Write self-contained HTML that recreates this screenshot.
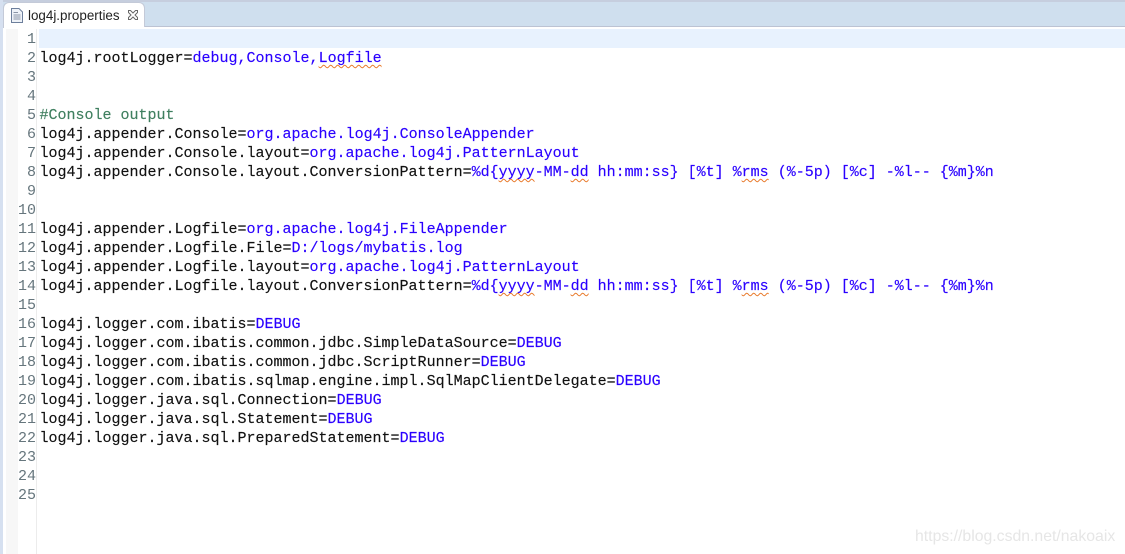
<!DOCTYPE html>
<html><head><meta charset="utf-8">
<style>
html,body{margin:0;padding:0;background:#fff}
#p{position:relative;width:1125px;height:554px;overflow:hidden;background:#fff;font-family:"Liberation Mono",monospace;font-size:15px}
.a{position:absolute}
.l{position:absolute;left:39.500px;margin-top:1px;white-space:pre;height:19px;line-height:19px;color:#111;-webkit-text-stroke:.15px currentColor}
.n{position:absolute;left:18px;width:18px;margin-top:1px;text-align:right;height:19px;line-height:19px;color:#66767d;font-family:"Liberation Mono",monospace;font-size:15px}
.v{color:#2a00ff}
.s{text-decoration:underline wavy #e8792a 1px;text-underline-offset:2px;text-decoration-skip-ink:none}
</style></head><body><div id="p">
<div class="a" style="left:0;top:0;width:1125px;height:2px;background:#c6cede"></div>
<div class="a" style="left:0;top:2px;width:1125px;height:24px;background:#cfdfee"></div>
<div class="a" style="left:0;top:26px;width:1125px;height:1px;background:#bcc3d3"></div>
<div class="a" style="left:0;top:0;width:3px;height:554px;background:#d6e0f0"></div>
<div class="a" style="left:3px;top:2px;width:142px;height:26px;background:#fff;border:1px solid #c4cad8;border-bottom:0;border-radius:6px 6px 0 0;box-sizing:border-box"></div>
<div class="a" style="left:4px;top:27px;width:1121px;height:527px;background:#fff"></div>
<svg class="a" style="left:11px;top:8px" width="12" height="15" viewBox="0 0 12 15"><path d="M.5.5H8L11.500 4V14.500H.5Z" fill="#eef2f8" stroke="#6d7f9c"/><path d="M2.500 4.500H7M2.500 7H9.500M2.500 9H9.500M2.500 11H9.500" stroke="#8a94a6"/></svg>
<div class="a" style="left:28px;top:7px;font:13.400px/18px 'Liberation Sans',sans-serif;color:#222;white-space:nowrap">log4j.properties</div>
<svg class="a" style="left:127px;top:9px" width="12" height="12" viewBox="0 0 12 12"><path d="M1.500 1.500H3.500L6 4L8.500 1.500H10.500V3.500L8 6L10.500 8.500V10.500H8.500L6 8L3.500 10.500H1.500V8.500L4 6L1.500 3.500Z" fill="#fff" stroke="#666"/></svg>
<div class="a" style="left:6px;top:29px;width:12px;height:525px;background:#f7f7f7"></div>
<div class="a" style="left:36px;top:29px;width:1px;height:525px;background:#ececec"></div>
<div class="a" style="left:39px;top:29px;width:1086px;height:19px;background:#e8f2fe"></div>
<div class="n" style="top:29px">1</div>
<div class="n" style="top:48px">2</div>
<div class="n" style="top:67px">3</div>
<div class="n" style="top:86px">4</div>
<div class="n" style="top:105px">5</div>
<div class="n" style="top:124px">6</div>
<div class="n" style="top:143px">7</div>
<div class="n" style="top:162px">8</div>
<div class="n" style="top:181px">9</div>
<div class="n" style="top:200px">10</div>
<div class="n" style="top:219px">11</div>
<div class="n" style="top:238px">12</div>
<div class="n" style="top:257px">13</div>
<div class="n" style="top:276px">14</div>
<div class="n" style="top:295px">15</div>
<div class="n" style="top:314px">16</div>
<div class="n" style="top:333px">17</div>
<div class="n" style="top:352px">18</div>
<div class="n" style="top:371px">19</div>
<div class="n" style="top:390px">20</div>
<div class="n" style="top:409px">21</div>
<div class="n" style="top:428px">22</div>
<div class="n" style="top:447px">23</div>
<div class="n" style="top:466px">24</div>
<div class="n" style="top:485px">25</div>
<div class="l" style="top:48px">log4j.rootLogger=<span class="v">debug,Console,<span class="s">Logfile</span></span></div>
<div class="l" style="top:105px;color:#3f7f5f">#Console output</div>
<div class="l" style="top:124px">log4j.appender.Console=<span class="v">org.apache.log4j.ConsoleAppender</span></div>
<div class="l" style="top:143px">log4j.appender.Console.layout=<span class="v">org.apache.log4j.PatternLayout</span></div>
<div class="l" style="top:162px">log4j.appender.Console.layout.ConversionPattern=<span class="v">%d{<span class="s">yyyy</span>-MM-<span class="s">dd</span> hh:mm:ss} [%t] %<span class="s">rms</span> (%-5p) [%c] -%l-- {%m}%n</span></div>
<div class="l" style="top:219px">log4j.appender.Logfile=<span class="v">org.apache.log4j.FileAppender</span></div>
<div class="l" style="top:238px">log4j.appender.Logfile.File=<span class="v">D:/logs/mybatis.log</span></div>
<div class="l" style="top:257px">log4j.appender.Logfile.layout=<span class="v">org.apache.log4j.PatternLayout</span></div>
<div class="l" style="top:276px">log4j.appender.Logfile.layout.ConversionPattern=<span class="v">%d{<span class="s">yyyy</span>-MM-<span class="s">dd</span> hh:mm:ss} [%t] %<span class="s">rms</span> (%-5p) [%c] -%l-- {%m}%n</span></div>
<div class="l" style="top:314px">log4j.logger.com.ibatis=<span class="v">DEBUG</span></div>
<div class="l" style="top:333px">log4j.logger.com.ibatis.common.jdbc.SimpleDataSource=<span class="v">DEBUG</span></div>
<div class="l" style="top:352px">log4j.logger.com.ibatis.common.jdbc.ScriptRunner=<span class="v">DEBUG</span></div>
<div class="l" style="top:371px">log4j.logger.com.ibatis.sqlmap.engine.impl.SqlMapClientDelegate=<span class="v">DEBUG</span></div>
<div class="l" style="top:390px">log4j.logger.java.sql.Connection=<span class="v">DEBUG</span></div>
<div class="l" style="top:409px">log4j.logger.java.sql.Statement=<span class="v">DEBUG</span></div>
<div class="l" style="top:428px">log4j.logger.java.sql.PreparedStatement=<span class="v">DEBUG</span></div>
<div class="a" style="left:915px;top:527px;font:15.800px/20px 'Liberation Sans',sans-serif;color:#e6e6e6;white-space:nowrap">https://blog.csdn.net/nakoaix</div>
</div></body></html>
